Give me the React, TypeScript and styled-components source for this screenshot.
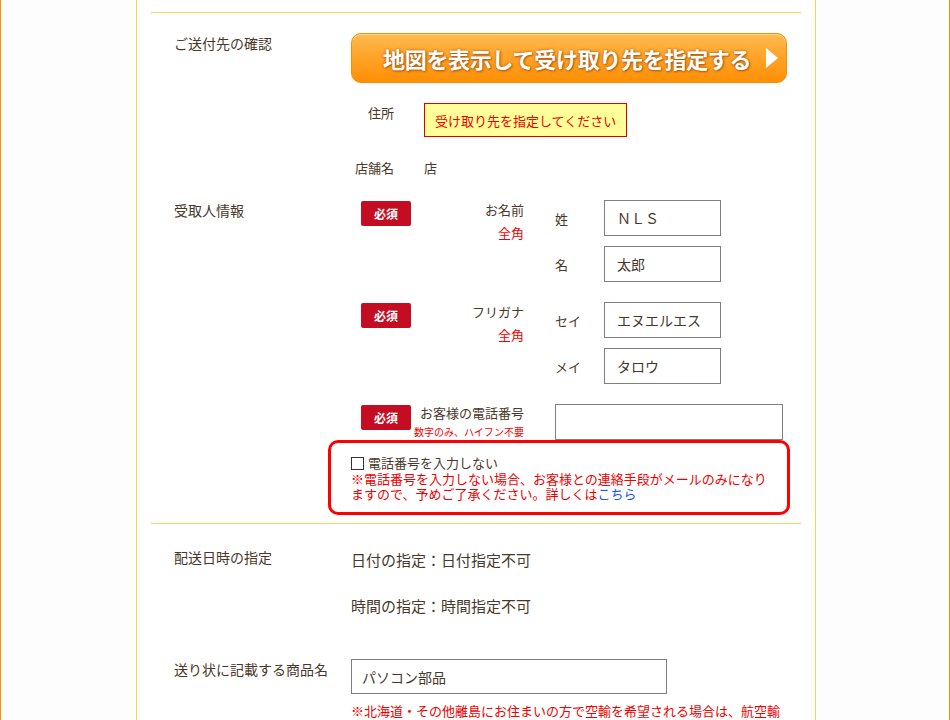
import styled, { createGlobalStyle } from 'styled-components'

const c = {
  text: '#4a3728',
  red: '#f00000',
  edge: '#f39800',
  panelEdge: '#ffd04a',
  rule: '#ffd45e',
  badge: '#c40d23',
  inputBorder: '#7f7f7f',
  link: '#1e50ff',
}

const GlobalStyle = createGlobalStyle`
  body {
    margin: 0;
    background: #fdfdfd;
    font-family: "Noto Sans CJK JP", "Noto Sans", sans-serif;
    color: ${c.text};
  }
`

// ─── Frame ─────────────────────────────────────────────────────────────────────
const Page = styled.div`
  box-sizing: border-box;
  min-height: 720px;
  border-left: 1px solid ${c.edge};
  border-right: 1px solid ${c.edge};
`

const Panel = styled.div`
  box-sizing: border-box;
  width: 680px;
  min-height: 720px;
  margin-left: 135px;
  padding: 12px 14px 0;
  border-left: 1px solid ${c.panelEdge};
  border-right: 1px solid ${c.panelEdge};
  background: #fff;
`

const Section = styled.section<{ $top: number; $bottom: number }>`
  border-top: 1px solid ${c.rule};
  padding-top: ${p => p.$top}px;
  padding-bottom: ${p => p.$bottom}px;
`

const Row = styled.div<{ $gap?: number }>`
  display: grid;
  grid-template-columns: 177px 1fr;
  padding-left: 23px;
  margin-top: ${p => p.$gap ?? 0}px;
`

const RowLabel = styled.div`
  font-size: 14px;
  line-height: 16px;
  margin-top: 2px;
  white-space: nowrap;
`

const RowBody = styled.div`
  min-width: 0;
`

// ─── Map button / address ──────────────────────────────────────────────────────
const MapButton = styled.button`
  box-sizing: border-box;
  width: 436px;
  height: 50px;
  display: flex;
  align-items: center;
  gap: 15px;
  padding: 0 0 0 31px;
  border: 1px solid #f39000;
  border-radius: 10px;
  background: linear-gradient(#ffbb52 0%, #ffa52a 45%, #ff8f05 100%);
  box-shadow: inset 0 1px 0 rgba(255, 230, 180, 0.7);
  color: #fff;
  font-family: "Noto Sans CJK JP", sans-serif;
  font-size: 22px;
  font-weight: 700;
  letter-spacing: -0.3px;
  text-shadow: 0 0 3px rgba(150, 70, 0, 0.75), 1px 1px 2px rgba(120, 50, 0, 0.5);
  cursor: pointer;
`

const AddressTable = styled.div`
  margin-top: 20px;
  display: grid;
  grid-template-columns: 43px 1fr;
  column-gap: 30px;
  align-items: start;
`

const SubLabel = styled.div<{ $top?: number }>`
  font-size: 13px;
  line-height: 16px;
  text-align: right;
  white-space: nowrap;
  margin-top: ${p => p.$top ?? 0}px;
`

const SubValue = styled.div<{ $top?: number }>`
  font-size: 13px;
  line-height: 16px;
  margin-top: ${p => p.$top ?? 0}px;
`

const Notice = styled.div`
  box-sizing: border-box;
  width: 203px;
  height: 34px;
  display: flex;
  align-items: center;
  padding-left: 10px;
  border: 1px solid #e00000;
  background: #ffff99;
  color: ${c.red};
  font-size: 13px;
`

// ─── Recipient fields ──────────────────────────────────────────────────────────
const Group = styled.div<{ $gap?: number }>`
  display: grid;
  grid-template-columns: 73px 100px 1fr;
  margin-top: ${p => p.$gap ?? 0}px;
`

const BadgeCell = styled.div`
  padding-left: 10px;
`

const Badge = styled.span`
  display: inline-flex;
  align-items: center;
  justify-content: center;
  width: 50px;
  height: 25px;
  border-radius: 2px;
  background: ${c.badge};
  color: #fff;
  font-size: 12px;
  font-weight: 700;
`

const GroupLabel = styled.div`
  display: flex;
  flex-direction: column;
  align-items: flex-end;
  white-space: nowrap;
`

const LabelMain = styled.span<{ $top: number }>`
  font-size: 13px;
  line-height: 16px;
  margin-top: ${p => p.$top}px;
`

const LabelNote = styled.span<{ $size: number; $top: number }>`
  color: ${c.red};
  font-size: ${p => p.$size}px;
  line-height: ${p => p.$size + 3}px;
  margin-top: ${p => p.$top}px;
`

const Fields = styled.div`
  padding-left: 31px;
  display: flex;
  flex-direction: column;
  gap: 10px;
`

const FieldLine = styled.div`
  display: flex;
  align-items: center;
`

const FieldName = styled.span`
  width: 49px;
  font-size: 13px;
`

const TextBox = styled.input<{ $w: number; $h?: number; $pad?: number }>`
  box-sizing: border-box;
  width: ${p => p.$w}px;
  height: ${p => p.$h ?? 36}px;
  margin: 0;
  padding: 0 0 0 ${p => p.$pad ?? 12}px;
  border: 1px solid ${c.inputBorder};
  border-radius: 0;
  background: #fff;
  color: ${c.text};
  font-family: "Noto Sans CJK JP", sans-serif;
  font-size: 14px;
  outline: none;
`

// ─── Phone opt-out box ─────────────────────────────────────────────────────────
const OptOut = styled.div`
  box-sizing: border-box;
  width: 462px;
  margin-left: -23px;
  padding: 12px 12px 11px 20px;
  border: 3px solid #ff0000;
  border-radius: 10px;
`

const CheckLine = styled.label`
  display: flex;
  align-items: center;
  gap: 4px;
  font-size: 13px;
  line-height: 16px;
`

const CheckBox = styled.span`
  box-sizing: border-box;
  width: 13px;
  height: 13px;
  border: 1px solid #333;
  background: #fff;
`

const RedText = styled.p<{ $top?: number; $width?: number }>`
  margin: ${p => p.$top ?? 0}px 0 0;
  max-width: ${p => (p.$width ? `${p.$width}px` : 'none')};
  color: ${c.red};
  font-size: 13px;
  line-height: 15px;
`

const Link = styled.a`
  color: ${c.link};
  text-decoration: none;
`

// ─── Delivery ──────────────────────────────────────────────────────────────────
const Plain = styled.div<{ $top: number }>`
  font-size: 15px;
  line-height: 20px;
  margin-top: ${p => p.$top}px;
`

function Arrow() {
  return (
    <svg width="12" height="20" viewBox="0 0 12 20">
      <polygon points="0,0 12,10 0,20" fill="#fff" />
    </svg>
  )
}

export default function App() {
  return (
    <Page>
      <GlobalStyle />
      <Panel>
        <Section $top={20} $bottom={8}>
          <Row>
            <RowLabel>ご送付先の確認</RowLabel>
            <RowBody>
              <MapButton>
                地図を表示して受け取り先を指定する
                <Arrow />
              </MapButton>
              <AddressTable>
                <SubLabel $top={2}>住所</SubLabel>
                <Notice>受け取り先を指定してください</Notice>
                <SubLabel $top={23}>店舗名</SubLabel>
                <SubValue $top={23}>店</SubValue>
              </AddressTable>
            </RowBody>
          </Row>

          <Row $gap={24}>
            <RowLabel>受取人情報</RowLabel>
            <RowBody>
              <Group>
                <BadgeCell><Badge>必須</Badge></BadgeCell>
                <GroupLabel>
                  <LabelMain $top={2}>お名前</LabelMain>
                  <LabelNote $size={13} $top={7}>全角</LabelNote>
                </GroupLabel>
                <Fields>
                  <FieldLine>
                    <FieldName>姓</FieldName>
                    <TextBox $w={117} readOnly value="ＮＬＳ" />
                  </FieldLine>
                  <FieldLine>
                    <FieldName>名</FieldName>
                    <TextBox $w={117} readOnly value="太郎" />
                  </FieldLine>
                </Fields>
              </Group>

              <Group $gap={20}>
                <BadgeCell><Badge>必須</Badge></BadgeCell>
                <GroupLabel>
                  <LabelMain $top={2}>フリガナ</LabelMain>
                  <LabelNote $size={13} $top={7}>全角</LabelNote>
                </GroupLabel>
                <Fields>
                  <FieldLine>
                    <FieldName>セイ</FieldName>
                    <TextBox $w={117} readOnly value="エヌエルエス" />
                  </FieldLine>
                  <FieldLine>
                    <FieldName>メイ</FieldName>
                    <TextBox $w={117} readOnly value="タロウ" />
                  </FieldLine>
                </Fields>
              </Group>

              <Group $gap={20}>
                <BadgeCell><Badge>必須</Badge></BadgeCell>
                <GroupLabel>
                  <LabelMain $top={1}>お客様の電話番号</LabelMain>
                  <LabelNote $size={10} $top={4}>数字のみ、ハイフン不要</LabelNote>
                </GroupLabel>
                <Fields>
                  <TextBox $w={228} readOnly value="" />
                </Fields>
              </Group>

              <OptOut>
                <CheckLine>
                  <CheckBox />
                  電話番号を入力しない
                </CheckLine>
                <RedText>
                  ※電話番号を入力しない場合、お客様との連絡手段がメールのみになりますので、予めご了承ください。詳しくは
                  <Link href="#">こちら</Link>
                </RedText>
              </OptOut>
            </RowBody>
          </Row>
        </Section>

        <Section $top={23} $bottom={0}>
          <Row>
            <RowLabel>配送日時の指定</RowLabel>
            <RowBody>
              <Plain $top={3}>日付の指定：日付指定不可</Plain>
              <Plain $top={26}>時間の指定：時間指定不可</Plain>
            </RowBody>
          </Row>

          <Row $gap={43}>
            <RowLabel>送り状に記載する商品名</RowLabel>
            <RowBody>
              <TextBox $w={316} $h={35} $pad={10} readOnly value="パソコン部品" />
              <RedText $top={9} $width={436}>
                ※北海道・その他離島にお住まいの方で空輸を希望される場合は、航空輸送できない商品がございますのでご注意ください。
              </RedText>
            </RowBody>
          </Row>
        </Section>
      </Panel>
    </Page>
  )
}
